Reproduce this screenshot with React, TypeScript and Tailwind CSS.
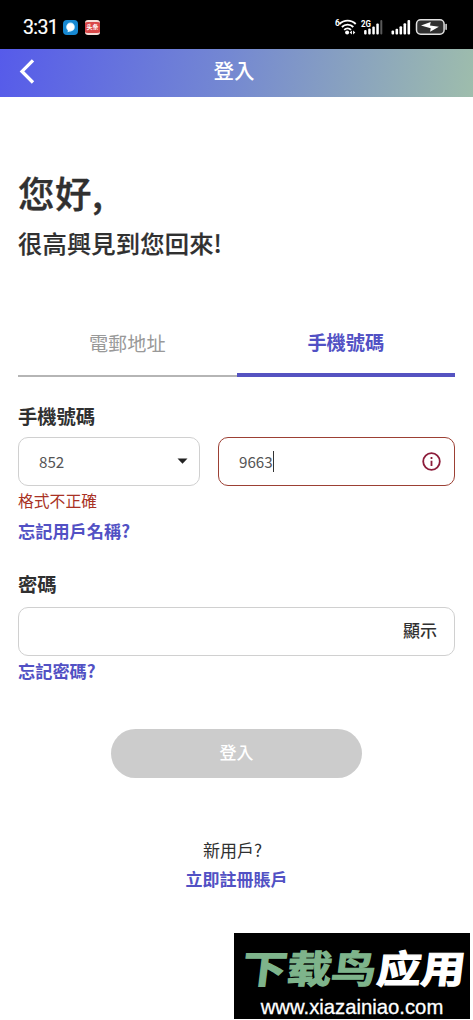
import React, { useState } from "react";

function StatusBar() {
  return (
    <div className="flex h-[49px] items-center bg-black pt-[5px] pr-[26px] pl-[23px] text-white">
      <span className="mt-[2px] w-[35px] font-['Roboto',sans-serif] text-[19.5px] leading-6 tracking-[-0.6px] [-webkit-text-stroke:0.2px_white]">3:31</span>
      <span className="ml-[5px] flex size-[15px] items-center justify-center rounded-[4px] bg-[#1688d2]">
        <svg width="11" height="11" viewBox="0 0 11 11">
          <circle cx="5.5" cy="5" r="4.4" fill="#bdeaff" />
          <path d="M3 7.5 2.6 10.3 6 9z" fill="#e4f7ff" />
          <circle cx="5.5" cy="5" r="3.6" fill="#fff" />
        </svg>
      </span>
      <span className="ml-[7px] flex h-[15px] w-[15px] items-center justify-center overflow-hidden rounded-[3px] border-y-2 border-[#f5dcd6] bg-[#d94848] font-['Noto_Sans_CJK_SC',sans-serif] text-[6px] leading-none font-bold whitespace-nowrap">
        头条
      </span>
      <svg className="ml-auto" width="113" height="20" viewBox="334.5 17 113 20" fill="none">
        <text x="335.5" y="26" fill="#fff" fontSize="8.5" fontWeight="700" fontFamily="Roboto, sans-serif">6</text>
        <g stroke="#fff" strokeWidth="1.9">
          <path d="M340 24a11.3 11.3 0 0 1 16.2 0" />
          <path d="M342.4 27a8 8 0 0 1 11.4 0" />
          <path d="M344.7 29.9a5 5 0 0 1 6.8 0" />
        </g>
        <circle cx="347.6" cy="32.6" r="2" fill="#fff" />
        <path d="m350.2 32.6 2.2-2v4zM355.8 32.6l-2.2-2v4z" fill="#fff" />
        <text x="361.5" y="26.5" fill="#fff" fontSize="9.5" fontWeight="700" fontFamily="Roboto, sans-serif" textLength="10" lengthAdjust="spacingAndGlyphs">2G</text>
        <g fill="#fff">
          <rect x="364.6" y="30" width="2.5" height="4.5" rx="1" />
          <rect x="368.7" y="28.5" width="2.5" height="6" rx="1" />
          <rect x="372.8" y="26.5" width="2.5" height="8" rx="1" />
          <rect x="376.8" y="23.5" width="2.5" height="11" rx="1" />
          <rect x="380.8" y="20" width="2" height="14.5" rx="1" opacity=".35" />
          <rect x="392" y="30.5" width="2.6" height="4" rx="1" />
          <rect x="396" y="28.7" width="2.6" height="5.8" rx="1" />
          <rect x="400" y="26.2" width="2.6" height="8.3" rx="1" />
          <rect x="404" y="23.3" width="2.6" height="11.2" rx="1" />
          <rect x="408" y="20" width="2.6" height="14.5" rx="1" />
        </g>
        <rect x="417" y="19.8" width="27.6" height="14.4" rx="4.2" fill="#303030" stroke="#e2e2e2" strokeWidth="1.5" />
        <path d="M446.6 24.6v4.6" stroke="#ddd" strokeWidth="1.5" strokeLinecap="round" />
        <path d="M421.5 25.4 431.2 22l-.7 3.5 8.9 1.2-8.8 5.1.6-3.6z" fill="#fff" />
      </svg>
    </div>
  );
}

function Header() {
  return (
    <header className="grid h-12 grid-cols-[1fr_auto_1fr] items-center bg-[linear-gradient(100deg,#565bea_0%,#7488d2_48%,#9ebdac_100%)] text-white">
      <button aria-label="返回" className="-mt-[5px] ml-[19px] w-4">
        <svg width="16" height="26" viewBox="0 0 16 26" fill="none" stroke="#fff" strokeWidth="3.3">
          <path d="M14 2.3 3 13.4 14 24.5" />
        </svg>
      </button>
      <h1 className="-mt-[7px] text-[20.5px] leading-8 font-medium -translate-x-[2.5px]">登入</h1>
    </header>
  );
}

function Watermark() {
  return (
    <div className="absolute top-[933px] left-[234px] flex h-[86px] w-[236px] flex-col items-center bg-black">
      <svg width="236" height="66" viewBox="0 0 236 66" className="shrink-0">
        <g transform="skewX(-7)" fontFamily="Noto Sans CJK SC, sans-serif" fontWeight="700" fontSize="38" strokeWidth="1.2">
          <text x="13" y="50.5" fill="#7eb48b" stroke="#7eb48b" textLength="134" lengthAdjust="spacingAndGlyphs">下载鸟</text>
          <text x="148" y="50.5" fill="#fff" stroke="#fff" textLength="88" lengthAdjust="spacingAndGlyphs">应用</text>
        </g>
      </svg>
      <span className="-mt-[3px] font-['Liberation_Sans',Arial,sans-serif] text-[20.3px] leading-[22px] text-white [-webkit-text-stroke:0.3px_white]">
        www.xiazainiao.com
      </span>
    </div>
  );
}

export default function App() {
  const [password, setPassword] = useState("");
  return (
    <div className="relative h-[1020px] w-[473px] overflow-hidden bg-white font-['Noto_Sans_CJK_TC',sans-serif] text-[#303030]">
      <StatusBar />
      <Header />
      <main className="flex flex-col px-[18px] pt-[71px]">
        <h2 className="h-[50px] text-[36.5px] leading-[50px] font-medium tracking-[0.5px] [-webkit-text-stroke:0.4px_#303030]">您好,</h2>
        <p className="mt-[7px] h-9 text-[24.3px] leading-9 font-medium tracking-[0.15px] [-webkit-text-stroke:0.2px_#303030]">很高興見到您回來!</p>

        <div className="mt-[61px] flex h-[55px] items-end text-center text-[19.2px]">
          <button className="h-[55px] flex-1 border-b-2 border-[#b5b5b5] pb-[11px] leading-[42px] text-[#999]">電郵地址</button>
          <button className="h-[55px] flex-1 border-b-4 border-[#5553c1] pb-[11px] leading-[40px] font-bold text-[#5251c4]">手機號碼</button>
        </div>

        <label className="mt-[23px] h-[37px] text-[19.3px] leading-8 font-bold">手機號碼</label>
        <div className="flex gap-[18px]">
          <button className="flex h-[49px] w-[182px] items-center justify-between rounded-[10px] border-[1.5px] border-[#d0d0d0] pr-[11px] pb-[1px] pl-5 text-[15.2px] text-[#555]">
            <span>852</span>
            <svg width="11" height="6" viewBox="0 0 11 6">
              <path d="M.5.5h10L5.5 5.7z" fill="#222" />
            </svg>
          </button>
          <div className="flex h-[49px] flex-1 items-center rounded-[10px] border-[1.5px] border-[#9c4034] pr-[13px] pl-5 text-[15.2px] text-[#555]">
            <span className="-mt-[1px]">9663</span>
            <span className="h-[21px] w-px bg-[#333]" />
            <svg className="ml-auto" width="19" height="19" viewBox="0 0 19 19" fill="none" stroke="#8c1c3a">
              <circle cx="9.5" cy="9.5" r="8.3" strokeWidth="1.8" />
              <path d="M9.5 8.7v5.3M9.5 5v2" strokeWidth="1.8" />
            </svg>
          </div>
        </div>
        <p className="mt-[3px] h-6 text-[15.8px] leading-6 text-[#a93225]">格式不正確</p>
        <a className="mt-[5px] h-[26px] text-[17.2px] leading-[26px] font-bold text-[#5251c4]">忘記用戶名稱?</a>

        <label className="mt-[24px] h-[39px] text-[19.3px] leading-8 font-bold">密碼</label>
        <div className="flex h-[49px] items-center rounded-[10px] border-[1.5px] border-[#d0d0d0] pr-[17px] pl-5">
          <input
            aria-label="密碼"
            type="password"
            value={password}
            onChange={(e) => setPassword(e.target.value)}
            className="min-w-0 flex-1 outline-none"
          />
          <button className="-mt-[4px] text-[17px] font-medium">顯示</button>
        </div>
        <a className="mt-[2px] h-[26px] text-[17.2px] leading-[26px] font-bold text-[#5251c4]">忘記密碼?</a>

        <button className="mt-[45px] h-[49px] w-[251px] self-center rounded-full bg-[#ccc] pb-[3px] text-[17px] font-medium text-white">登入</button>
        <p className="mt-[59px] h-[28px] -translate-x-1 text-center text-[17px] leading-[26px]">新用戶?</p>
        <a className="h-[28px] text-center text-[17px] leading-[28px] font-bold text-[#5251c4]">立即註冊賬戶</a>
      </main>
      <Watermark />
    </div>
  );
}
